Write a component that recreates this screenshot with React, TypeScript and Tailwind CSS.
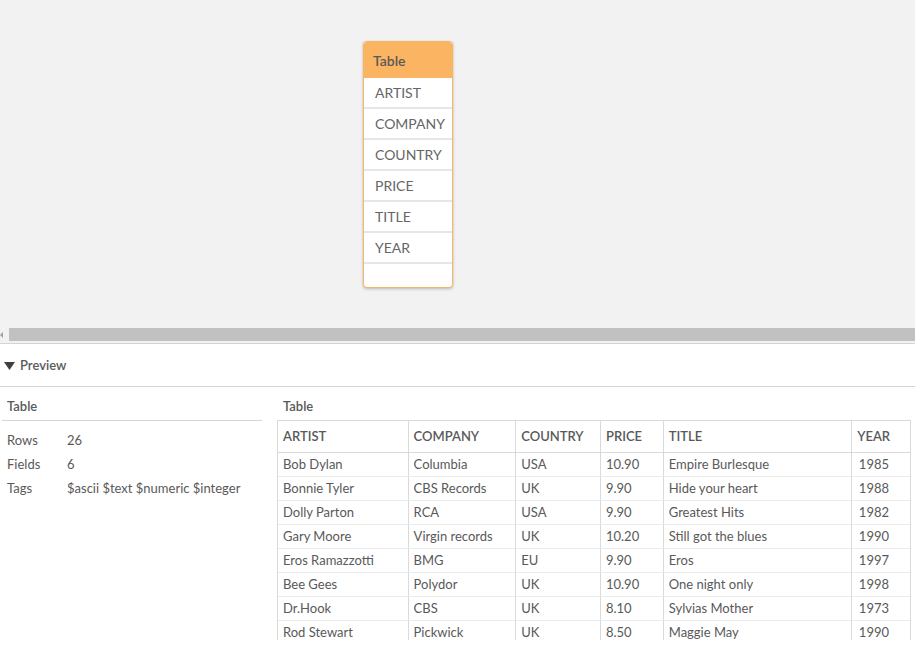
import React from "react";

const fields = ["ARTIST", "COMPANY", "COUNTRY", "PRICE", "TITLE", "YEAR"];

const rows = [
  ["Bob Dylan", "Columbia", "USA", "10.90", "Empire Burlesque", "1985"],
  ["Bonnie Tyler", "CBS Records", "UK", "9.90", "Hide your heart", "1988"],
  ["Dolly Parton", "RCA", "USA", "9.90", "Greatest Hits", "1982"],
  ["Gary Moore", "Virgin records", "UK", "10.20", "Still got the blues", "1990"],
  ["Eros Ramazzotti", "BMG", "EU", "9.90", "Eros", "1997"],
  ["Bee Gees", "Polydor", "UK", "10.90", "One night only", "1998"],
  ["Dr.Hook", "CBS", "UK", "8.10", "Sylvias Mother", "1973"],
  ["Rod Stewart", "Pickwick", "UK", "8.50", "Maggie May", "1990"],
];

const colW = ["w-[131px]", "w-[108px]", "w-[85px]", "w-[63px]", "w-[189px]", "w-[58px]"];

export default function App() {
  return (
    <div
      className="w-[915px] h-[645px] overflow-hidden bg-white flex flex-col text-[#595959]"
      style={{ fontFamily: "Lato, 'Open Sans', sans-serif" }}
    >
      {/* Canvas */}
      <div className="h-[328px] bg-[#f2f2f2] flex flex-col shrink-0">
        <div className="flex-1 pt-[41px] pl-[363px]">
          <div className="w-[90px] rounded-[4px] border border-[#f8b562] bg-white shadow-[0_1px_3px_rgba(0,0,0,0.25)] overflow-hidden">
            <div className="h-[36px] bg-[#fbb562] flex items-center pl-[9px] pt-[1px] text-[14px] font-semibold text-[#595959]">
              Table
            </div>
            {fields.map((f) => (
              <div
                key={f}
                className="h-[31px] flex items-center pl-[11px] text-[14px] text-[#666666] border-b-2 border-[#e6e6e6]"
              >
                {f}
              </div>
            ))}
            <div className="h-[23px]" />
          </div>
        </div>
      </div>
      {/* Scrollbar */}
      <div className="h-[13px] bg-[#f2f2f2] flex items-stretch shrink-0">
        <div className="w-[9px] flex items-center">
          <div className="w-0 h-0 border-y-[3px] border-y-transparent border-r-[3px] border-r-[#a0a0a0]" />
        </div>
        <div className="flex-1 bg-[#c1c1c1]" />
      </div>
      <div className="h-[2px] bg-[#f2f2f2] shrink-0" />
      <div className="h-[1px] bg-[#d4d4d4] shrink-0" />
      {/* Preview header */}
      <div className="h-[43px] flex items-center pl-[4px] pt-[2px] gap-[5px] border-b border-[#d4d4d4] shrink-0">
        <svg width="11" height="9" viewBox="0 0 11 9">
          <path d="M0 0 H11 L5.5 8 Z" fill="#404040" />
        </svg>
        <span className="text-[13px] font-semibold text-[#595959]">Preview</span>
      </div>
      {/* Body */}
      <div className="flex flex-1 min-h-0">
        <div className="w-[262px] pl-[2px] shrink-0">
          <div className="h-[34px] flex items-end pb-[4px] pl-[5px] border-b border-[#d4d4d4] text-[13px] font-semibold text-[#595959]">
            Table
          </div>
          <div className="pt-[8px] pl-[5px] text-[13px]">
            {[
              ["Rows", "26"],
              ["Fields", "6"],
              ["Tags", "$ascii $text $numeric $integer"],
            ].map(([k, v]) => (
              <div key={k} className="h-[24px] flex items-center">
                <span className="w-[60px]">{k}</span>
                <span>{v}</span>
              </div>
            ))}
          </div>
        </div>
        <div className="ml-[15px] w-[634px] h-[253px] overflow-hidden">
          <div className="h-[33px] flex items-end pb-[4px] pl-[6px] text-[13px] font-semibold text-[#595959]">
            Table
          </div>
          <div className="border-l border-r border-t border-[#d9d9d9]">
            <div className="flex h-[32px] border-b border-[#d9d9d9] text-[13px] font-semibold text-[#595959]">
              {fields.map((f, i) => (
                <div
                  key={f}
                  className={`${colW[i]} flex items-center pl-[5px] ${i < 5 ? "border-r border-[#d9d9d9]" : ""}`}
                >
                  {f}
                </div>
              ))}
            </div>
            {rows.map((r, ri) => (
              <div key={ri} className="flex h-[24px] border-b border-[#ebebeb] text-[13px]">
                {r.map((c, i) => (
                  <div
                    key={i}
                    className={`${colW[i]} flex items-center ${i === 5 ? "justify-end pr-[21px]" : "pl-[5px] border-r border-[#d9d9d9]"}`}
                  >
                    {c}
                  </div>
                ))}
              </div>
            ))}
          </div>
        </div>
      </div>
    </div>
  );
}
